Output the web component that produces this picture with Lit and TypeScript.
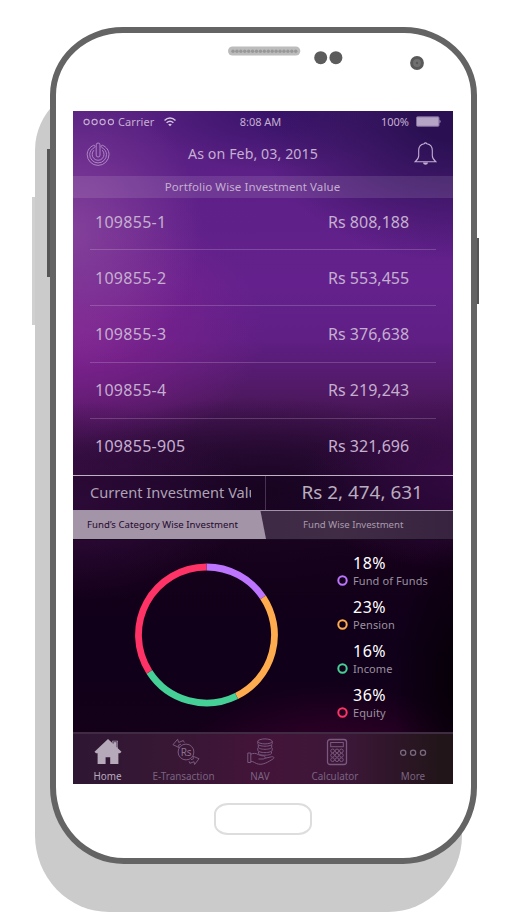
import { LitElement, html, css, svg } from "lit";
import { customElement } from "lit/decorators.js";

interface Holding { id: string; value: string; }
interface Fund { share: string; label: string; color: string; from: number; to: number; }

const HOLDINGS: Holding[] = [
  { id: "109855-1", value: "Rs 808,188" },
  { id: "109855-2", value: "Rs 553,455" },
  { id: "109855-3", value: "Rs 376,638" },
  { id: "109855-4", value: "Rs 219,243" },
  { id: "109855-905", value: "Rs 321,696" },
];

const FUNDS: Fund[] = [
  { share: "18%", label: "Fund of Funds", color: "#bd75ff", from: 0, to: 56.3 },
  { share: "23%", label: "Pension", color: "#ffac4e", from: 56.3, to: 153.8 },
  { share: "16%", label: "Income", color: "#45d097", from: 153.8, to: 237.2 },
  { share: "36%", label: "Equity", color: "#ff3366", from: 237.2, to: 360 },
];

const point = (deg: number, r: number) => {
  const a = (deg * Math.PI) / 180;
  return `${(71.5 + r * Math.sin(a)).toFixed(2)} ${(72 - r * Math.cos(a)).toFixed(2)}`;
};
const arc = (from: number, to: number, r = 68) =>
  `M${point(from, r)}A${r} ${r} 0 ${to - from > 180 ? 1 : 0} 1 ${point(to, r)}`;

const homeIcon = svg`<svg width="28" height="28" viewBox="0 0 28 28">
  <path fill="#b5a9ba" d="M14 1 0.5 13.8 2 15.2H3.6V26H11.600V19.300H16.200V26H24.400V15.200H26L27.500 13.800 23.800 10.300V2.800H18.300V5z"/>
  <path d="M19.200 5.700V3.700H22.900V9.200" fill="none" stroke="#3a2340" stroke-width=".7"/></svg>`;

const transferIcon = svg`<svg class="nudge" width="28" height="28" viewBox="0 0 28 28" fill="none" stroke="#79597f" stroke-width="1">
  <circle cx="14" cy="14" r="7.900"/>
  <path d="M12.300 4.500 11.300 2.500 6.700 4.500 5.600 1.300 1 6.700 7.100 9.600 6.500 7.100 9 6.200"/>
  <path d="M17 23.300 17.900 25.300 22 23.700 22.600 26.500 27 20.700 20.900 18.200 21.500 20.800 19 21.700"/>
  <text class="rs" x="14" y="17.800" text-anchor="middle">Rs</text></svg>`;

const coinsIcon = svg`<svg class="nudge" width="28" height="28" viewBox="0 0 28 28" fill="none" stroke="#79597f" stroke-width="1">
  <ellipse cx="18" cy="3.400" rx="7.200" ry="2.500"/>
  <path d="M10.800 3.400v2.300c0 1.400 3.200 2.500 7.200 2.500s7.200-1.100 7.200-2.500V3.400M11.300 7v2c0 1.400 3 2.300 6.700 2.300s6.700-.9 6.700-2.300V7M10.800 9.800v2.300c0 1.400 3.200 2.500 7.200 2.500s7.200-1.100 7.200-2.500V9.800M11.500 13.600v1.600c0 1.100 2.900 2 6.500 2s6.500-.9 6.500-2v-1.600"/>
  <path d="M.8 15h3v9.500H.8zM3.800 16.300c2.300-1.200 5-1.300 7.300.2 1.600 1 3.300 1.300 5 1.300 2.700 0 2.700 3.200 0 3.200h-4.600M17.800 20.300l6.500-1.500c2.600-.6 3.400 1.200 1.500 2.300-4.500 2.700-9.500 6-14.500 5-3-.6-4.600-2.800-7.500-2.800"/></svg>`;

const calculatorIcon = svg`<svg class="nudge" width="22" height="28" viewBox="0 0 22 28" fill="none" stroke="#79597f" stroke-width="1">
  <rect x="1.500" y="1.500" width="19" height="25" rx="2.500" stroke-width="1.300"/>
  <rect x="4.700" y="4.500" width="12.600" height="4.200"/>
  ${[12.9, 17.3, 21.7].map((y) => [6.6, 11, 15.4].map((x) => svg`<circle cx=${x} cy=${y} r="1.850"/>`))}</svg>`;

const moreIcon = svg`<svg width="28" height="28" viewBox="0 0 28 28" fill="none" stroke="#79697f" stroke-width="1.300">
  <circle cx="4.200" cy="14.800" r="2.600"/><circle cx="14.100" cy="14.800" r="2.600"/><circle cx="24" cy="14.800" r="2.600"/></svg>`;

const TABS = [
  { label: "Home", icon: homeIcon },
  { label: "E-Transaction", icon: transferIcon },
  { label: "NAV", icon: coinsIcon },
  { label: "Calculator", icon: calculatorIcon },
  { label: "More", icon: moreIcon },
];

@customElement("status-bar")
class StatusBar extends LitElement {
  static styles = css`
    :host { display: grid; grid-template-columns: 1fr auto 1fr; align-items: center; height: 21px; padding: 0 12px 0 10px; font-size: 11px; }
    .left, .right { display: flex; align-items: center; }
    .right { justify-content: flex-end; gap: 7px; }
    .carrier { margin: 0 9px 0 3px; letter-spacing: .1px; }
    .time { margin-right: 3px; }
    svg { display: block; }
  `;
  render() {
    return html`
      <div class="left">
        <svg width="32" height="8" viewBox="0 0 32 8" fill="none" stroke="#c5aed2" stroke-width="1.100">
          ${[3.6, 11.6, 19.6, 27.9].map((x) => svg`<circle cx=${x} cy="4" r="2.600"/>`)}
        </svg>
        <span class="carrier">Carrier</span>
        <svg width="12" height="10" viewBox="0 0 12 10" fill="none" stroke="#d4c3de" stroke-width="1.500">
          <path d="M.5 3.500C3.700.300 8.300.300 11.500 3.500M2.600 5.800c2-1.900 4.800-1.900 6.800 0"/>
          <path d="M4.200 7.400c1-.9 2.600-.9 3.600 0L6 9.300z" fill="#d4c3de" stroke="none"/>
        </svg>
      </div>
      <span class="time">8:08 AM</span>
      <div class="right">
        <span>100%</span>
        <svg width="25" height="11" viewBox="0 0 25 11">
          <rect x=".5" y=".8" width="22.500" height="9.500" rx="1" fill="#b5a4c5" stroke="#816a9a"/>
          <path d="M23.500 3.800c1.500.6 1.500 2.900 0 3.500z" fill="#a694b8"/>
        </svg>
      </div>`;
  }
}

@customElement("fund-chart")
class FundChart extends LitElement {
  static styles = css`
    :host { display: flex; height: 192px; }
    .donut { display: block; flex: none; margin: 23px 0 0 62px; }
    .legend { display: flex; flex-direction: column; margin: 15px 0 0 58px; }
    .fund { display: grid; grid-template-columns: 16px auto; height: 44px; grid-template-rows: 17px 17px; align-items: center; }
    .share { grid-column: 2; font-size: 16px; line-height: 17px; color: #fff; letter-spacing: .5px; }
    .ring { display: block; }
    .label { font-size: 11px; line-height: 17px; color: #9a919f; letter-spacing: .1px; white-space: nowrap; }
  `;
  render() {
    return html`
      <svg class="donut" width="144" height="144" viewBox="0 0 144 144" fill="none" stroke-width="6.800">
        ${FUNDS.map((f) => svg`<path d=${arc(f.from, f.to)} stroke=${f.color}/>`)}
      </svg>
      <div class="legend">
        ${FUNDS.map((f) => html`<div class="fund">
          <span class="share">${f.share}</span>
          <svg class="ring" width="11" height="11" viewBox="0 0 11 11" fill="none" stroke=${f.color} stroke-width="2"><circle cx="5.500" cy="5.500" r="4.200"/></svg>
          <span class="label">${f.label}</span>
        </div>`)}
      </div>`;
  }
}

@customElement("tab-bar")
class TabBar extends LitElement {
  static styles = css`
    :host { display: grid; grid-template-columns: 69px 83px 70px 80px 76px; box-sizing: border-box; height: 52px; border-top: 2px solid #3f2b42; background: linear-gradient(90deg, #2e1733, #371734 25%, #431439 50%, #3c1738 72%, #211519 97%); }
    .tab { display: flex; flex-direction: column; align-items: center; padding-top: 4px; color: #796480; font-size: 9.900px; line-height: 14px; gap: 3px; }
    .tab svg { display: block; }
    .tab .nudge { margin-left: 4px; }
    .tab:nth-of-type(3) .nudge { margin-left: 1px; }
    .active { color: #b9acbf; }
    .rs { font: 10px "Noto Sans", sans-serif; letter-spacing: -.2px; fill: #8c7092; stroke: none; }
  `;
  render() {
    return TABS.map((t, i) => html`<div class=${i === 0 ? "tab active" : "tab"}>${t.icon}<span>${t.label}</span></div>`);
  }
}

@customElement("app-root")
class AppRoot extends LitElement {
  static styles = css`
    :host { display: block; position: relative; width: 510px; height: 920px; overflow: hidden; background: #fff; font-family: "Noto Sans", "Open Sans", sans-serif; }
    .shadow, .phone { position: absolute; box-sizing: border-box; width: 427px; height: 837px; border-radius: 73px 73px 74px 74px / 68px 68px 77px 77px; }
    .shadow { left: 35px; top: 82px; height: 830px; background: #cbcbcb; }
    .phone { left: 50px; top: 27px; border: 6px solid #646464; background: #fff; display: flex; flex-direction: column; align-items: center; }
    .key { position: absolute; background: #555; }
    .volume { left: 47px; top: 149px; width: 4px; height: 128px; }
    .volume-shadow { left: 32px; top: 197px; width: 4px; height: 128px; background: #d0d0d0; }
    .power { left: 476px; top: 238px; width: 3px; height: 66px; }
    .sensors { display: block; width: 415px; height: 78px; flex: none; }
    .screen { width: 380px; height: 673px; flex: none; margin-right: 1px; overflow: hidden; color: #c5afd0;
      background:
        radial-gradient(ellipse 70px 150px at 390px 570px, #050005 0, #05000500 100%),
        radial-gradient(ellipse 160px 85px at 260px 660px, #3b002f 0, #3b002f00 100%),
        radial-gradient(ellipse 170px 100px at 0 390px, #350d41 0, #350d4100 100%),
        radial-gradient(ellipse 150px 90px at 380px 370px, #3b0c4a 0, #3b0c4a00 100%),
        radial-gradient(ellipse 230px 95px at 190px 380px, #1c0625 0, #1c062500 100%),
        radial-gradient(ellipse 200px 150px at 380px 0, #2a1053 20%, #2a105300 100%),
        radial-gradient(ellipse 130px 140px at 0 120px, #83409a 0, #83409a00 100%),
        radial-gradient(ellipse 190px 130px at 0 220px, #822291 0, #82229100 100%),
        radial-gradient(ellipse 130px 60px at 200px 0, #38136a 0, #38136a00 100%),
        linear-gradient(180deg, #55207f 0, #5e2088 12%, #64218d 26%, #5f1f84 34%, #4e185f 43%, #350f42 50%, #220730 57%, #150019 64%, #10001a 80%, #160018 100%); }
    .header { display: flex; align-items: center; justify-content: space-between; height: 44px; padding: 0 16px 0 13px; }
    .header svg { display: block; }
    .title { font-size: 14.200px; margin: -1px 0 0 -18px; letter-spacing: .08px; }
    .band { height: 22px; line-height: 22px; background: #ffffff1c; font-size: 11.500px; text-align: center; padding-right: 21px; letter-spacing: .1px; }
    .holdings { height: 277px; overflow: hidden; padding: 0 17px; box-sizing: border-box; }
    .holding { display: grid; grid-template-columns: 238px 1fr; align-items: center; height: 56.200px; line-height: 22px; font-size: 16px; box-sizing: border-box; border-bottom: 1px solid #ffffff2e; letter-spacing: .28px; }
    .holding:first-child { height: 52.200px; padding-bottom: 3px; }
    .holding:nth-child(2) { padding-top: 1px; }
    .holding:nth-child(4) { padding-bottom: 1px; }
    .holding:last-child { border: 0; padding-bottom: 2px; }
    .account { padding-left: 5px; }
    .value { letter-spacing: .02px; }
    .total { display: grid; grid-template-columns: 193px 1fr; height: 36px; box-sizing: border-box; border-top: 1px solid #c0b1c6; border-bottom: 1px solid #a192aa; align-items: stretch; line-height: 33px; background: #0c001538; color: #afa2b5; }
    .total-label { border-right: 1px solid #4b3056; padding: 0 15px 0 17px; font-size: 14.600px; }
    .clip { display: block; overflow: hidden; white-space: nowrap; width: 161px; }
    .total-value { font-size: 18.900px; padding-left: 35.500px; color: #b9adbf; }
    .switch { display: grid; grid-template-columns: 193px 1fr; height: 29px; box-sizing: border-box; line-height: 28px; font-size: 9.600px; background: linear-gradient(90deg, #3b2445, #402c45 70%, #37233f); border-bottom: 1px solid #160920; }
    .selected { background: #a394a8; color: #24092e; clip-path: polygon(0 0, 187.500px 0, 100% 100%, 0 100%); padding-left: 14px; letter-spacing: .04px; }
    .other { padding-left: 37px; color: #a99bae; }
    .home-button { box-sizing: border-box; width: 98px; height: 32px; flex: none; margin: 19px 2px 0 0; border: 2px solid #ddd; border-radius: 14px / 11px; }
  `;
  render() {
    return html`
      <div class="key volume-shadow"></div>
      <div class="shadow"></div>
      <div class="key volume"></div>
      <div class="key power"></div>
      <div class="phone">
        <svg class="sensors" viewBox="56 33 415 78">
          <rect x="228" y="46.500" width="72.300" height="9" rx="4.500" fill="#bcbcbc"/>
          ${Array.from({ length: 17 }, (_, i) => svg`<circle cx=${233 + i * 3.92} cy="51.200" r="1.700" fill="#989898"/>`)}
          <circle cx="320.700" cy="57.700" r="6.500" fill="#5c5c5c"/>
          <circle cx="335.900" cy="57.700" r="6.500" fill="#5c5c5c"/>
          <circle cx="417" cy="63" r="6.900" fill="#595959"/>
          <circle cx="417" cy="63" r="3.900" fill="#707070"/>
          <circle cx="417" cy="63" r="1.200" fill="#555"/>
        </svg>
        <div class="screen">
          <status-bar></status-bar>
          <div class="header">
            <svg width="24" height="24" viewBox="0 0 24 24" fill="none" stroke="#b58fc8" stroke-width=".9">
              <rect x="10.200" y="1" width="3.800" height="14" rx="1.900"/>
              <path d="M7.600 3.300C3.800 4.900 1.200 8.500 1.200 12.500a10.900 10.900 0 0 0 21.800 0c0-4-2.600-7.600-6.400-9.200-1.400-.4-2 1.500-.8 2.200 2.700 1.300 4.700 4 4.700 7a8.400 8.400 0 0 1-16.800 0c0-3 2-5.700 4.700-7 1.200-.7.6-2.600-.8-2.200z"/>
              <path d="M7.900 8.200A5.900 5.900 0 0 0 6.200 12.400a5.900 5.900 0 0 0 11.800 0 5.900 5.900 0 0 0-1.700-4.200"/>
            </svg>
            <span class="title">As on Feb, 03, 2015</span>
            <svg width="23" height="24" viewBox="0 0 23 24" fill="none" stroke="#c4afd3" stroke-width="1.100">
              <path d="M10.200 1.800a1.400 1.400 0 0 1 2.600 0c3.500.6 5.500 3 5.500 6.800v5.200c0 2.300 1.200 4 3.500 5.900H1.200c2.300-1.900 3.500-3.600 3.500-5.900V8.600c0-3.800 2-6.200 5.500-6.800z"/>
              <path d="M9 20.500c.3 3 4.700 3 5 0z" fill="#c4afd3" stroke="none"/>
            </svg>
          </div>
          <div class="band">Portfolio Wise Investment Value</div>
          <div class="holdings">
            ${HOLDINGS.map((h) => html`<div class="holding"><span class="account">${h.id}</span><span class="value">${h.value}</span></div>`)}
          </div>
          <div class="total">
            <div class="total-label"><span class="clip">Current Investment Value</span></div>
            <div class="total-value">Rs 2, 474, 631</div>
          </div>
          <div class="switch">
            <div class="selected">Fund’s Category Wise Investment</div>
            <div class="other">Fund Wise Investment</div>
          </div>
          <fund-chart></fund-chart>
          <tab-bar></tab-bar>
        </div>
        <div class="home-button"></div>
      </div>`;
  }
}
